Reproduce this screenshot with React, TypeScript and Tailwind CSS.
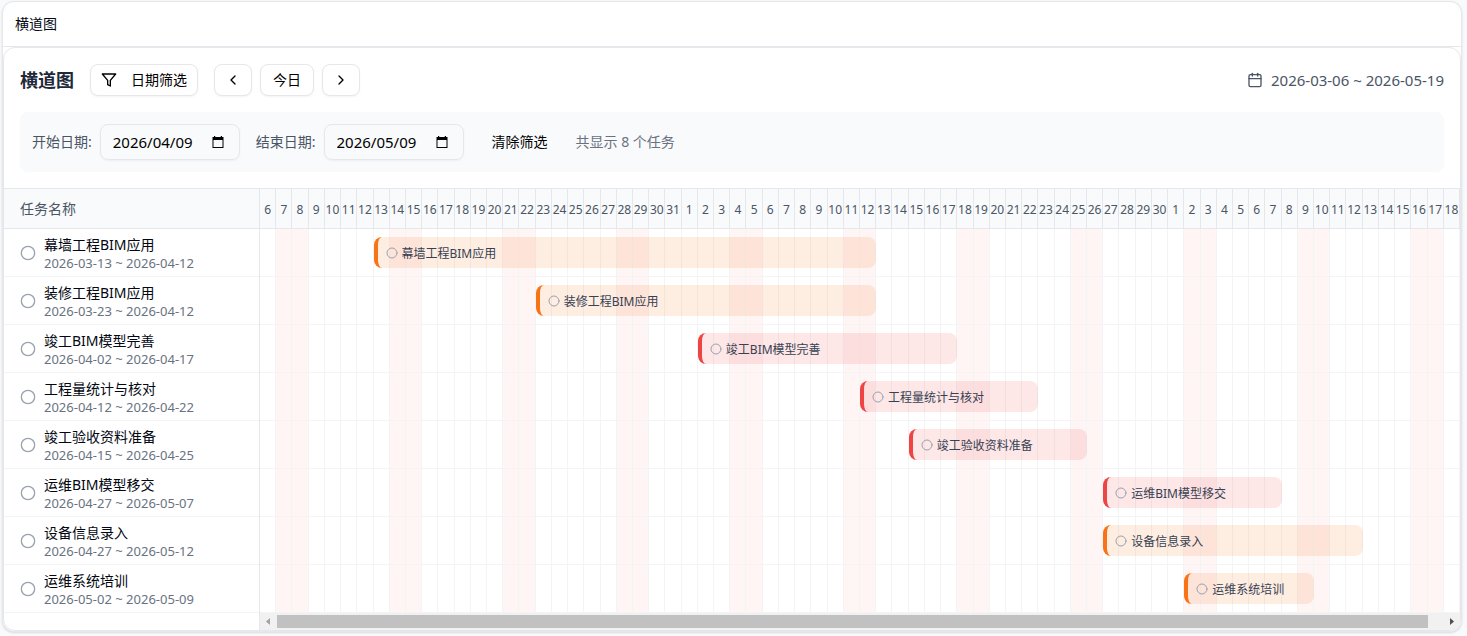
import { useState } from 'react';
import { ChevronLeft, ChevronRight, Circle } from 'lucide-react';

type Tone = 'orange' | 'red';

interface Task {
  name: string;
  start: string;
  end: string;
  tone: Tone;
}

const RANGE_START = '2026-03-06';
const RANGE_END = '2026-05-19';
const DAY_COUNT = 74;
const DAY_MS = 86400000;

const tasks: Task[] = [
  { name: '幕墙工程BIM应用', start: '2026-03-13', end: '2026-04-12', tone: 'orange' },
  { name: '装修工程BIM应用', start: '2026-03-23', end: '2026-04-12', tone: 'orange' },
  { name: '竣工BIM模型完善', start: '2026-04-02', end: '2026-04-17', tone: 'red' },
  { name: '工程量统计与核对', start: '2026-04-12', end: '2026-04-22', tone: 'red' },
  { name: '竣工验收资料准备', start: '2026-04-15', end: '2026-04-25', tone: 'red' },
  { name: '运维BIM模型移交', start: '2026-04-27', end: '2026-05-07', tone: 'red' },
  { name: '设备信息录入', start: '2026-04-27', end: '2026-05-12', tone: 'orange' },
  { name: '运维系统培训', start: '2026-05-02', end: '2026-05-09', tone: 'orange' },
];

const barTone: Record<Tone, string> = {
  orange: 'border-[#f97316] bg-[#f97316]/13',
  red: 'border-[#ef4444] bg-[#ef4444]/13',
};

const days = Array.from({ length: DAY_COUNT }, (_, i) => new Date(Date.parse(RANGE_START) + i * DAY_MS));
const dayIndex = (date: string) => Math.round((Date.parse(date) - Date.parse(RANGE_START)) / DAY_MS);
const isWeekend = (date: Date) => date.getUTCDay() === 0 || date.getUTCDay() === 6;

const dayGrid = 'grid grid-cols-[repeat(74,minmax(0,1fr))]';
const outlineButton =
  'flex h-8 items-center rounded-lg border border-gray-200 bg-white text-sm text-black shadow-xs';

function FunnelIcon() {
  return (
    <svg className="size-4" viewBox="0 0 24 24" fill="none" stroke="currentColor" strokeWidth="2" strokeLinecap="round" strokeLinejoin="round" aria-hidden="true">
      <polygon points="22 3 2 3 10 12.46 10 19 14 21 14 12.46 22 3" />
    </svg>
  );
}

function CalendarIcon() {
  return (
    <svg className="size-4" viewBox="0 0 24 24" fill="none" stroke="currentColor" strokeWidth="2" strokeLinecap="round" strokeLinejoin="round" aria-hidden="true">
      <path d="M8 2v4" />
      <path d="M16 2v4" />
      <rect width="18" height="18" x="3" y="4" rx="2" />
      <path d="M3 10h18" />
    </svg>
  );
}

function PickerIcon() {
  return (
    <svg className="size-4" viewBox="0 0 16 16" fill="currentColor" aria-hidden="true">
      <path d="M3 2h1.200v1h5.600V2H11v1h1.500v11h-11V3H3ZM2.500 6v7h9V6Z" fillRule="evenodd" />
    </svg>
  );
}

function DateField({ id, label, value, onChange }: { id: string; label: string; value: string; onChange: (v: string) => void }) {
  return (
    <div className="flex items-center gap-2">
      <label htmlFor={id} className="text-sm text-gray-600">
        {label}
      </label>
      <div className="flex h-9 w-35 items-center rounded-lg border border-gray-200 bg-transparent px-3 shadow-xs">
        <input
          id={id}
          value={value}
          onChange={(e) => onChange(e.target.value)}
          className="min-w-0 flex-1 bg-transparent text-[15px] leading-5 text-black outline-none"
        />
        <button type="button" aria-label="选择日期" className="text-black">
          <PickerIcon />
        </button>
      </div>
    </div>
  );
}

export default function App() {
  const [start, setStart] = useState('2026/04/09');
  const [end, setEnd] = useState('2026/05/09');

  return (
    <div className="min-h-screen bg-[#f9fafb] pt-px pr-[5px] pb-1 pl-0.5 font-['Noto_Sans','Noto_Sans_CJK_SC',sans-serif] text-gray-950">
      <div className="rounded-xl border border-gray-200 bg-white shadow-sm">
        <header className="flex h-[45px] items-center border-b border-gray-200 px-3 text-sm">横道图</header>

        <main className="overflow-hidden rounded-xl border border-gray-200 bg-white">
          <div className="flex flex-col gap-4 p-4">
            <div className="flex items-center justify-between">
              <div className="flex items-center gap-4">
                <h1 className="text-lg leading-8 font-bold text-gray-800">横道图</h1>
                <button type="button" className={`${outlineButton} gap-3.5 px-2.5`}>
                  <FunnelIcon />
                  日期筛选
                </button>
                <div className="flex items-center gap-2">
                  <button type="button" aria-label="上一页" className={`${outlineButton} px-2.5`}>
                    <ChevronLeft className="size-4" />
                  </button>
                  <button type="button" className={`${outlineButton} px-3`}>
                    今日
                  </button>
                  <button type="button" aria-label="下一页" className={`${outlineButton} px-2.5`}>
                    <ChevronRight className="size-4" />
                  </button>
                </div>
              </div>
              <div className="flex items-center gap-2 text-gray-600">
                <CalendarIcon />
                <span className="text-[15px] leading-5">
                  {RANGE_START} ~ {RANGE_END}
                </span>
              </div>
            </div>

            <div className="flex items-center gap-4 rounded-lg bg-gray-50 p-3">
              <DateField id="start-date" label="开始日期:" value={start} onChange={setStart} />
              <DateField id="end-date" label="结束日期:" value={end} onChange={setEnd} />
              <button type="button" className="h-8 px-3 text-sm text-black">
                清除筛选
              </button>
              <span className="text-sm text-gray-500">共显示 {tasks.length} 个任务</span>
            </div>
          </div>

          <div className="flex border-t border-gray-200">
            <div className="w-64 shrink-0 border-r border-gray-200">
              <div className="flex h-10 items-center border-b border-gray-200 bg-gray-50 px-4 text-sm text-gray-600">
                任务名称
              </div>
              <ul>
                {tasks.map((task) => (
                  <li key={task.name} className="flex h-12 items-center gap-2 border-b border-gray-100 px-4">
                    <Circle className="size-4 shrink-0 text-gray-400" />
                    <div className="pt-0.5">
                      <div className="text-sm leading-[18px]">{task.name}</div>
                      <div className="text-[13px] leading-[18px] text-gray-500">
                        {task.start} ~ {task.end}
                      </div>
                    </div>
                  </li>
                ))}
              </ul>
            </div>

            <div className="min-w-0 flex-1">
              <div className={`${dayGrid} h-10 border-b border-gray-200 bg-gray-50`}>
                {days.map((day) => (
                  <div
                    key={day.getTime()}
                    className="flex items-center justify-center border-r border-gray-200 pt-0.5 text-xs text-gray-600"
                  >
                    {day.getUTCDate()}
                  </div>
                ))}
              </div>

              {tasks.map((task) => {
                const first = dayIndex(task.start);
                const last = dayIndex(task.end);
                return (
                  <div key={task.name} className={`${dayGrid} h-12 grid-rows-1 border-b border-gray-100`}>
                    {days.map((day, i) => (
                      <div
                        key={day.getTime()}
                        className={`row-start-1 border-r border-gray-100 ${isWeekend(day) ? 'bg-[#fff5f5]' : ''}`}
                        style={{ gridColumnStart: i + 1 }}
                      />
                    ))}
                    <div
                      className={`row-start-1 my-2 flex items-center gap-1 overflow-hidden rounded-lg border-l-4 px-2 ${barTone[task.tone]}`}
                      style={{ gridColumnStart: first + 1, gridColumnEnd: last + 2 }}
                    >
                      <Circle className="size-3 shrink-0 text-gray-400" />
                      <span className="truncate pt-0.5 text-xs text-gray-700">{task.name}</span>
                    </div>
                  </div>
                );
              })}

              <div className="flex h-[17px] items-center bg-[#f1f1f1]">
                <svg className="size-[17px] shrink-0 text-[#a3a3a3]" viewBox="0 0 17 17" fill="currentColor" aria-hidden="true">
                  <path d="M10 5v7L6 8.500Z" />
                </svg>
                <div className="h-[13px] flex-1 bg-[#c1c1c1]" />
                <div className="w-[15px]" />
                <svg className="size-[17px] shrink-0 text-[#505050]" viewBox="0 0 17 17" fill="currentColor" aria-hidden="true">
                  <path d="M7 5v7l4-3.500Z" />
                </svg>
              </div>
            </div>
          </div>
        </main>
      </div>
    </div>
  );
}
